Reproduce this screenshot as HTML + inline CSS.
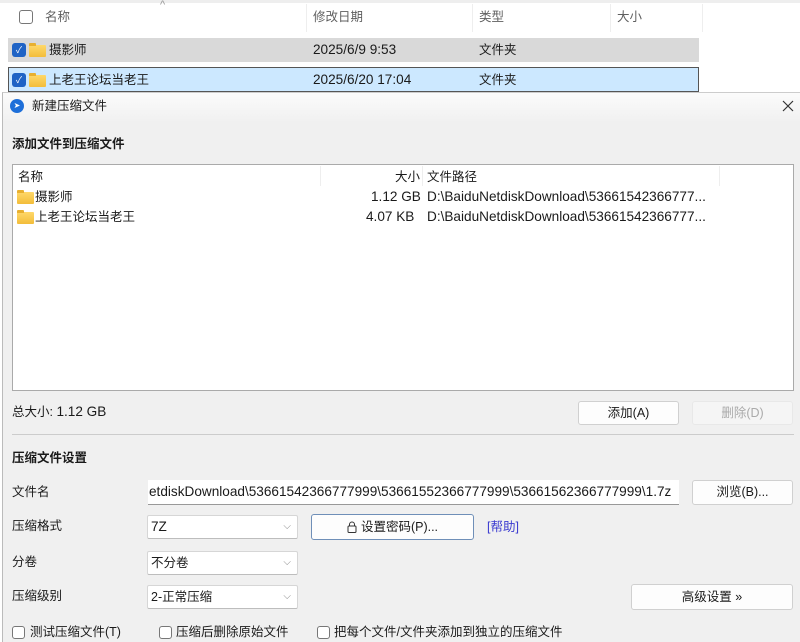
<!DOCTYPE html>
<html><head><meta charset="utf-8"><style>
*{box-sizing:border-box;margin:0;padding:0}
body{width:800px;height:636px;overflow:hidden;background:#fff;font-family:"Liberation Sans","Noto Sans CJK SC",sans-serif;font-size:12.5px;line-height:18px;color:#1a1a1a;position:relative}
.a{position:absolute;white-space:nowrap}
.l{font-size:13.6px}
.chk{position:absolute;width:13px;height:13px;border:1px solid #777;border-radius:3px;background:#fff}
.cb{position:absolute;width:14px;height:14px;border-radius:3px;background:#1f63c5;color:#fff;font-size:9px;line-height:14px;text-align:center}
.fold{position:absolute;width:17px;height:12px;background:linear-gradient(#ffd86a,#f3bd3a);border-radius:1px}
.fold:before{content:"";position:absolute;left:0;top:-2px;width:7px;height:3px;background:#e8b030;border-radius:1px 1px 0 0}
.btn{position:absolute;background:#fdfdfd;border:1px solid #d0d0d0;border-radius:3px;text-align:center}
.sel{position:absolute;background:#fff;border:1px solid #d6d6d6;border-bottom-color:#bdbdbd;border-radius:2px;padding-left:3px}
.sel:after{content:"⌵";position:absolute;right:6px;top:0;color:#888;font-size:10px}
.gc{color:#5f5f5f}
</style></head><body>
<div class="a" style="left:0;top:0;width:800px;height:3px;background:#eee"></div>
<div class="a" style="left:160px;top:-4px;color:#999;font-size:11px">^</div>
<div class="chk" style="left:19px;top:10px;width:14px;height:14px"></div>
<div class="a gc" style="left:45px;top:8px">名称</div>
<div class="a" style="left:306px;top:4px;width:1px;height:28px;background:#eee"></div>
<div class="a gc" style="left:313px;top:8px">修改日期</div>
<div class="a" style="left:472px;top:4px;width:1px;height:28px;background:#eee"></div>
<div class="a gc" style="left:479px;top:8px">类型</div>
<div class="a" style="left:610px;top:4px;width:1px;height:28px;background:#eee"></div>
<div class="a gc" style="left:617px;top:8px">大小</div>
<div class="a" style="left:702px;top:4px;width:1px;height:28px;background:#eee"></div>
<div class="a" style="left:8px;top:38px;width:691px;height:24px;background:#d9d9d9"></div>
<div class="cb" style="left:12px;top:43px">✓</div><div class="fold" style="left:29px;top:45px"></div>
<div class="a" style="left:49px;top:41px">摄影师</div>
<div class="a l" style="left:313px;top:41px">2025/6/9 9:53</div>
<div class="a" style="left:479px;top:41px">文件夹</div>
<div class="a" style="left:8px;top:67px;width:691px;height:25px;background:#cce8ff;border:1px solid #555"></div>
<div class="cb" style="left:12px;top:73px">✓</div><div class="fold" style="left:29px;top:75px"></div>
<div class="a" style="left:49px;top:71px">上老王论坛当老王</div>
<div class="a l" style="left:313px;top:71px">2025/6/20 17:04</div>
<div class="a" style="left:479px;top:71px">文件夹</div>
<div class="a" style="left:2px;top:92px;width:800px;height:550px;background:#f0f0f0;border-left:1px solid #bbb;border-top:1px solid #ccc"></div>
<div class="a" style="left:3px;top:93px;width:797px;height:30px;background:linear-gradient(#fbfbfb,#f0f0f0)"></div>
<div class="a" style="left:10px;top:99px;width:14px;height:14px;border-radius:50%;background:#1e6fd9;color:#fff;font-size:8px;line-height:14px;text-align:center">➤</div>
<div class="a" style="left:32px;top:97px">新建压缩文件</div>
<svg class="a" style="left:782px;top:100px" width="12" height="12"><path d="M1 1L11 11M11 1L1 11" stroke="#333" stroke-width="1.2"/></svg>
<div class="a" style="left:12px;top:135px;font-weight:bold">添加文件到压缩文件</div>
<div class="a" style="left:12px;top:164px;width:782px;height:227px;background:#fff;border:1px solid #aaa"></div>
<div class="a" style="left:320px;top:166px;width:1px;height:20px;background:#eee"></div>
<div class="a" style="left:422px;top:166px;width:1px;height:20px;background:#eee"></div>
<div class="a" style="left:719px;top:166px;width:1px;height:20px;background:#eee"></div>
<div class="a" style="left:18px;top:168px">名称</div>
<div class="a" style="left:395px;top:168px">大小</div>
<div class="a" style="left:427px;top:168px">文件路径</div>
<div class="fold" style="left:17px;top:192px"></div>
<div class="a" style="left:35px;top:188px">摄影师</div>
<div class="a l" style="left:371px;top:188px">1.12 GB</div>
<div class="a l" style="left:427px;top:188px">D:\BaiduNetdiskDownload\53661542366777...</div>
<div class="fold" style="left:17px;top:212px"></div>
<div class="a" style="left:35px;top:208px">上老王论坛当老王</div>
<div class="a l" style="left:366px;top:208px">4.07 KB</div>
<div class="a l" style="left:427px;top:208px">D:\BaiduNetdiskDownload\53661542366777...</div>
<div class="a" style="left:12px;top:403px">总大小: <span class="l">1.12 GB</span></div>
<div class="btn" style="left:578px;top:401px;width:101px;height:24px;line-height:22px">添加(A)</div>
<div class="btn" style="left:692px;top:401px;width:101px;height:24px;line-height:22px;color:#aaa;background:#f5f5f5;border-color:#e8e8e8">删除(D)</div>
<div class="a" style="left:12px;top:434px;width:782px;height:1px;background:#ccc"></div>
<div class="a" style="left:12px;top:449px;font-weight:bold">压缩文件设置</div>
<div class="a" style="left:12px;top:483px">文件名</div>
<div class="a l" style="left:148px;top:480px;width:531px;height:25px;background:#fff;border-bottom:1px solid #999;line-height:24px;padding-left:1px;overflow:hidden">etdiskDownload\53661542366777999\53661552366777999\53661562366777999\1.7z</div>
<div class="btn" style="left:692px;top:480px;width:101px;height:25px;line-height:23px">浏览(B)...</div>
<div class="a" style="left:12px;top:517px">压缩格式</div>
<div class="sel l" style="left:147px;top:515px;width:151px;height:24px;line-height:22px">7Z</div>
<div class="btn" style="left:311px;top:514px;width:163px;height:26px;line-height:24px;border-color:#6f8fb8"><svg width="10" height="12" style="vertical-align:-2px;margin-right:4px"><rect x="1" y="5" width="8" height="6.5" rx="1" fill="none" stroke="#333"/><path d="M2.5 5V3.5a2.5 2.5 0 0 1 5 0V5" fill="none" stroke="#333"/></svg>设置密码(P)...</div>
<div class="a" style="left:487px;top:518px;color:#3a3ad0">[帮助]</div>
<div class="a" style="left:12px;top:553px">分卷</div>
<div class="sel" style="left:147px;top:551px;width:151px;height:24px;line-height:22px">不分卷</div>
<div class="a" style="left:12px;top:587px">压缩级别</div>
<div class="sel" style="left:147px;top:585px;width:151px;height:24px;line-height:22px">2-正常压缩</div>
<div class="btn" style="left:631px;top:584px;width:162px;height:26px;line-height:24px">高级设置 »</div>
<div class="chk" style="left:12px;top:626px"></div><div class="a" style="left:30px;top:623px">测试压缩文件(T)</div>
<div class="chk" style="left:159px;top:626px"></div><div class="a" style="left:176px;top:623px">压缩后删除原始文件</div>
<div class="chk" style="left:317px;top:626px"></div><div class="a" style="left:334px;top:623px">把每个文件/文件夹添加到独立的压缩文件</div>
</body></html>
